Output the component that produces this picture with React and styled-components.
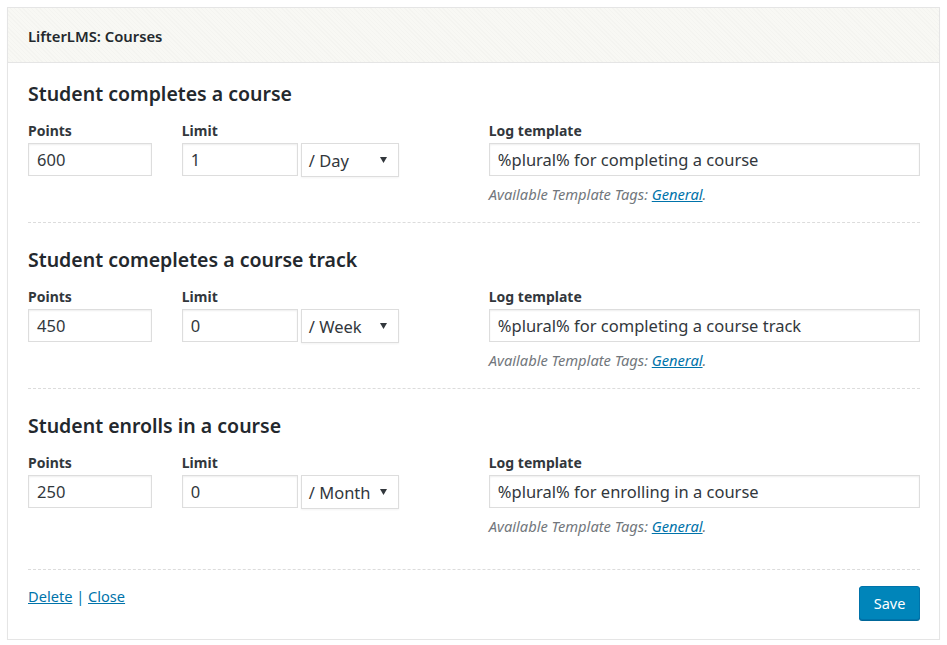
import React from "react";
import styled, { createGlobalStyle } from "styled-components";

const GlobalStyle = createGlobalStyle`
  body {
    margin: 0;
    background: #fff;
    font-family: "Noto Sans", "Open Sans", sans-serif;
    color: #23282d;
  }
`;

const Panel = styled.div`
  margin: 7px 7px 0 7px;
  width: 933px;
  box-sizing: border-box;
  border: 1px solid #e5e5e5;
  box-shadow: 0 1px 1px rgba(0, 0, 0, 0.04);
  background: #fff;
`;

const PanelHeader = styled.div`
  height: 55px;
  box-sizing: border-box;
  display: flex;
  align-items: center;
  padding: 2px 20px 0;
  border-bottom: 1px solid #e5e5e5;
  background-color: #f8f8f4;
  background-image: repeating-linear-gradient(
    45deg,
    rgba(0, 0, 0, 0.014) 0 1px,
    transparent 1px 3px
  );
  font-size: 14.8px;
  font-weight: 600;
`;

const Body = styled.div`
  padding: 0 19px 0 20px;
`;

const Section = styled.div`
  padding: ${(p) => (p.$first ? "18px" : "24px")} 0 19px;
  border-top: ${(p) => (p.$first ? "none" : "1px dashed #dcdcdc")};
`;

const Heading = styled.h3`
  margin: 0 0 14px;
  font-size: 19.5px;
  line-height: 26px;
  font-weight: 600;
  color: #23282d;
`;

const FieldRow = styled.div`
  display: flex;
  align-items: flex-start;
`;

const Field = styled.div`
  display: flex;
  flex-direction: column;
  width: ${(p) => p.$width}px;
  margin-right: ${(p) => p.$gap || 0}px;
`;

const Label = styled.label`
  font-size: 14px;
  line-height: 20px;
  font-weight: 700;
  color: #32373c;
  margin-bottom: 2px;
`;

const Inline = styled.div`
  display: flex;
  gap: 3px;
`;

const TextBox = styled.div`
  box-sizing: border-box;
  width: ${(p) => (p.$width ? `${p.$width}px` : "100%")};
  height: 33px;
  border: 1px solid #dddddd;
  box-shadow: inset 0 1px 2px rgba(0, 0, 0, 0.07);
  padding: 0 8px 1px;
  display: flex;
  align-items: center;
  font-size: 16.5px;
  color: #32373c;
  background: #fff;
`;

const Select = styled.div`
  box-sizing: border-box;
  width: 98px;
  height: 34px;
  border: 1px solid #dddddd;
  box-shadow: 0 1px 2px rgba(0, 0, 0, 0.05);
  padding: 0 8px 0 7px;
  display: flex;
  align-items: center;
  justify-content: space-between;
  font-size: 16.5px;
  color: #32373c;
  background: #fff;
`;

const Arrow = styled.svg`
  width: 7px;
  height: 7px;
  margin-right: 3px;
  margin-top: -2px;
`;

const Hint = styled.p`
  margin: 9px 0 0;
  font-size: 14.7px;
  line-height: 18px;
  font-style: italic;
  color: #72777c;
`;

const Link = styled.a`
  color: #0073aa;
  text-decoration: underline;
  cursor: pointer;
`;

const Footer = styled.div`
  margin: 15px 19px 0 20px;
  padding: 16px 0 19px;
  border-top: 1px dashed #dcdcdc;
  display: flex;
  justify-content: space-between;
  align-items: flex-start;
`;

const FooterLinks = styled.div`
  font-size: 14.6px;
  line-height: 20px;
  color: #0073aa;
`;

const SaveButton = styled.button`
  width: 61px;
  height: 34px;
  background: #0085ba;
  border: 1px solid #0073aa;
  border-radius: 3px;
  box-shadow: 0 1px 0 #006799;
  color: #fff;
  font-family: inherit;
  font-size: 14.5px;
  cursor: pointer;
`;

const triggers = [
  {
    title: "Student completes a course",
    points: "600",
    limit: "1",
    period: "/ Day",
    log: "%plural% for completing a course",
  },
  {
    title: "Student comepletes a course track",
    points: "450",
    limit: "0",
    period: "/ Week",
    log: "%plural% for completing a course track",
  },
  {
    title: "Student enrolls in a course",
    points: "250",
    limit: "0",
    period: "/ Month",
    log: "%plural% for enrolling in a course",
  },
];

function TriggerSection({ trigger, first }) {
  return (
    <Section $first={first}>
      <Heading>{trigger.title}</Heading>
      <FieldRow>
        <Field $width={124} $gap={30}>
          <Label>Points</Label>
          <TextBox>{trigger.points}</TextBox>
        </Field>
        <Field $width={217} $gap={90}>
          <Label>Limit</Label>
          <Inline>
            <TextBox $width={116}>{trigger.limit}</TextBox>
            <Select>
              <span>{trigger.period}</span>
              <Arrow viewBox="0 0 8 8">
                <path d="M0 1 L8 1 L4 8 Z" fill="#32373c" />
              </Arrow>
            </Select>
          </Inline>
        </Field>
        <Field $width={432}>
          <Label>Log template</Label>
          <TextBox>{trigger.log}</TextBox>
          <Hint>
            Available Template Tags: <Link>General</Link>.
          </Hint>
        </Field>
      </FieldRow>
    </Section>
  );
}

export default function App() {
  return (
    <>
      <GlobalStyle />
      <Panel>
        <PanelHeader>LifterLMS: Courses</PanelHeader>
        <Body>
          {triggers.map((t, i) => (
            <TriggerSection key={t.title} trigger={t} first={i === 0} />
          ))}
        </Body>
        <Footer>
          <FooterLinks>
            <Link>Delete</Link> | <Link>Close</Link>
          </FooterLinks>
          <SaveButton>Save</SaveButton>
        </Footer>
      </Panel>
    </>
  );
}
